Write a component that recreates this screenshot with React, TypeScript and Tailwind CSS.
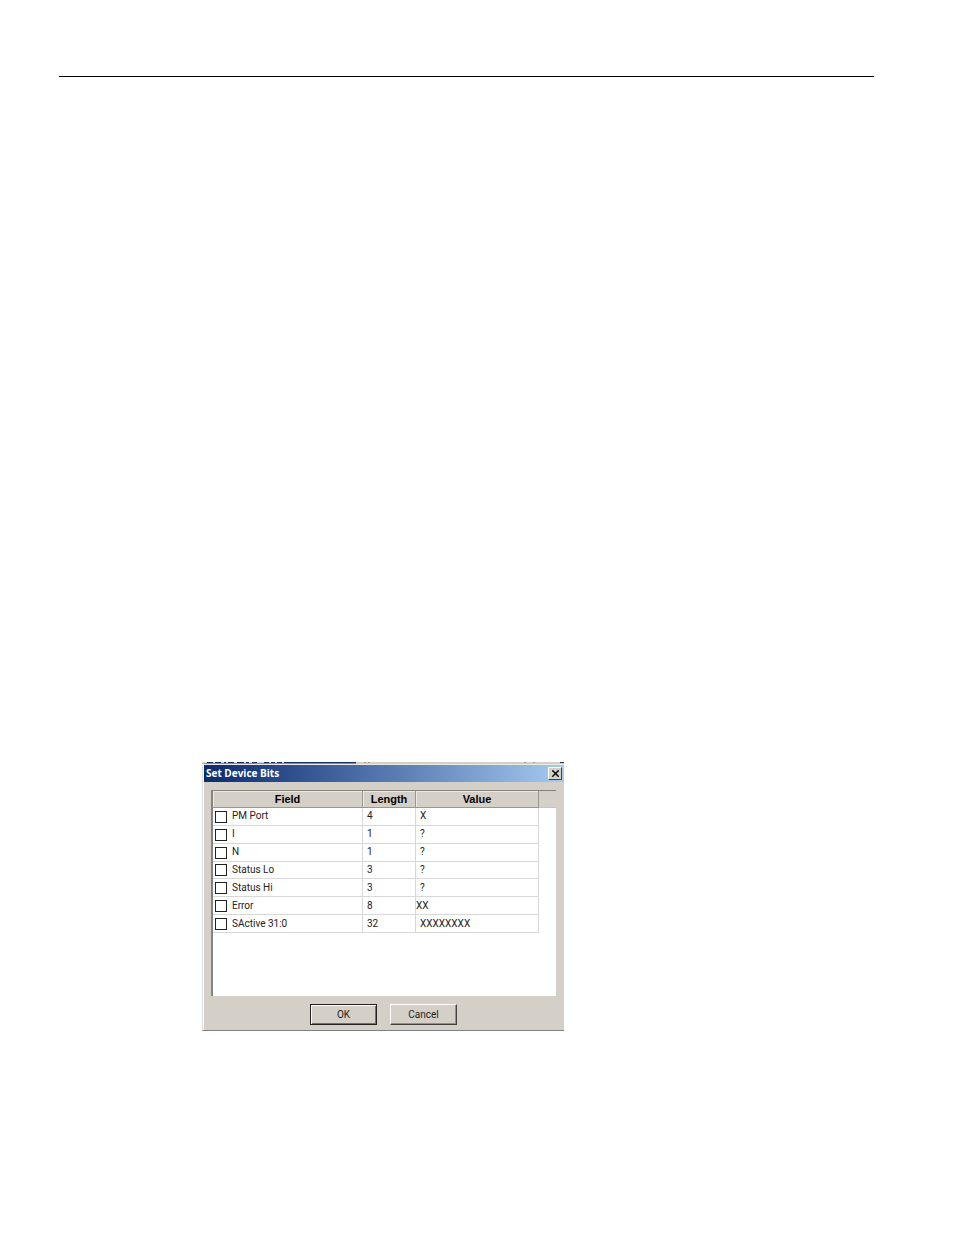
import { X } from "lucide-react";

type BitField = {
  id: string;
  name: string;
  length: number;
  value: string;
  flush?: boolean;
};

const fields: BitField[] = [
  { id: "pm-port", name: "PM Port", length: 4, value: "X" },
  { id: "i", name: "I", length: 1, value: "?" },
  { id: "n", name: "N", length: 1, value: "?" },
  { id: "status-lo", name: "Status Lo", length: 3, value: "?" },
  { id: "status-hi", name: "Status Hi", length: 3, value: "?" },
  { id: "error", name: "Error", length: 8, value: "XX", flush: true },
  { id: "sactive", name: "SActive 31:0", length: 32, value: "XXXXXXXX" },
];

export default function App() {
  return (
    <main className="flow-root min-h-screen bg-white pr-20 pl-[59px] font-[Roboto,sans-serif] text-[10px] text-[#222]">
      <hr className="mt-[76px] border-t border-black" />
      <div className="mt-[685px] ml-[143px] w-[362px]">
        <WindowBehind />
        <SetDeviceBitsDialog />
      </div>
    </main>
  );
}

// Sliver of the window that the dialog is stacked on
function WindowBehind() {
  return (
    <svg className="block h-[3px] w-full" viewBox="0 0 362 3" preserveAspectRatio="none" aria-hidden="true">
      <rect width="362" height="2" fill="#d4d0c8" />
      <rect y="2" width="362" height="1" fill="#eceae5" />
      <path d="M2 .5H154" stroke="#1b2f66" />
      <path d="M2 1.5H154" stroke="#7d89a6" />
      <path
        d="M2 .5h3M11 .5h2M19 .5h3M24 .5h2M32 .5h3M42 .5h2M47 .5h3M55 .5h7M67 .5h2M73 .5h2M80 .5h2"
        stroke="#d5dbe4"
      />
      <path d="M162 .5h2M166 .5h2M322 .5h2M331 .5h2" stroke="#a09d96" />
      <path d="M358 .5h4" stroke="#333" />
    </svg>
  );
}

function SetDeviceBitsDialog() {
  return (
    <section
      role="dialog"
      aria-labelledby="dialog-title"
      className="border-b border-l border-b-[#808080] border-l-[#dedbd4] bg-[#d4d0c8] shadow-[inset_1px_0_0_#fff]"
    >
      <header className="ml-px flex h-[17px] items-center justify-between bg-linear-to-r from-[#0c2a6e] to-[#a6caf0] px-[2px]">
        <h1 id="dialog-title" className="pb-px font-['Open_Sans',sans-serif] text-[10px] leading-4 font-bold text-white">
          Set Device Bits
        </h1>
        <button
          type="button"
          aria-label="Close"
          className="flex h-[13px] w-[14px] items-center justify-center border border-t-white border-r-[#404040] border-b-[#404040] border-l-white bg-[#d4d0c8] text-black"
        >
          <X className="size-[11px]" strokeWidth={3} />
        </button>
      </header>

      <div className="mx-2 mt-2 h-[206px] border-t border-l-2 border-[#87847e] bg-white">
        <FieldTable />
      </div>

      <footer className="flex gap-[13px] pt-2 pb-[5px] pl-[107px]">
        <button
          type="button"
          className="h-[21px] w-[67px] border border-[#222] bg-[#d4d0c8] leading-4 shadow-[inset_1px_1px_0_#fff,inset_-1px_-1px_0_#707070]"
        >
          OK
        </button>
        <button
          type="button"
          className="h-[21px] w-[67px] border border-t-white border-r-[#404040] border-b-[#404040] border-l-white bg-[#d4d0c8] leading-4 shadow-[inset_-1px_-1px_0_#909090]"
        >
          Cancel
        </button>
      </footer>
    </section>
  );
}

function FieldTable() {
  return (
    <table className="h-[142px] w-full table-fixed border-separate border-spacing-0 leading-4">
      <colgroup>
        <col className="w-[150px]" />
        <col className="w-[53px]" />
        <col className="w-[123px]" />
        <col />
      </colgroup>
      <thead className="bg-[#d4d0c8] font-['Liberation_Sans',Arial,sans-serif] text-[11px] text-black">
        <tr className="h-[17px]">
          <HeaderCell label="Field" />
          <HeaderCell label="Length" />
          <HeaderCell label="Value" />
          <td className="border-b border-[#c8c4bc] p-0" />
        </tr>
      </thead>
      <tbody>
        {fields.map((field) => (
          <FieldRow key={field.id} field={field} />
        ))}
      </tbody>
    </table>
  );
}

function HeaderCell({ label }: { label: string }) {
  return (
    <th
      scope="col"
      className="border-r border-b border-[#9a978f] p-0 text-center font-bold shadow-[inset_1px_1px_0_#ece9e2]"
    >
      {label}
    </th>
  );
}

function FieldRow({ field }: { field: BitField }) {
  return (
    <tr>
      <td className="border-r border-b border-[#d8d8d8] p-0">
        <div className="flex h-4 items-center gap-[5px] pl-[2px]">
          <input
            id={field.id}
            type="checkbox"
            className="mt-px size-3 appearance-none border border-[#222] bg-white checked:bg-[#222]"
          />
          <label htmlFor={field.id}>{field.name}</label>
        </div>
      </td>
      <td className="border-r border-b border-[#d8d8d8] p-0 pl-1">{field.length}</td>
      <td
        className={
          field.flush
            ? "border-r border-b border-[#d8d8d8] p-0"
            : "border-r border-b border-[#d8d8d8] p-0 pl-1"
        }
      >
        {field.value}
      </td>
      <td className="p-0" />
    </tr>
  );
}
